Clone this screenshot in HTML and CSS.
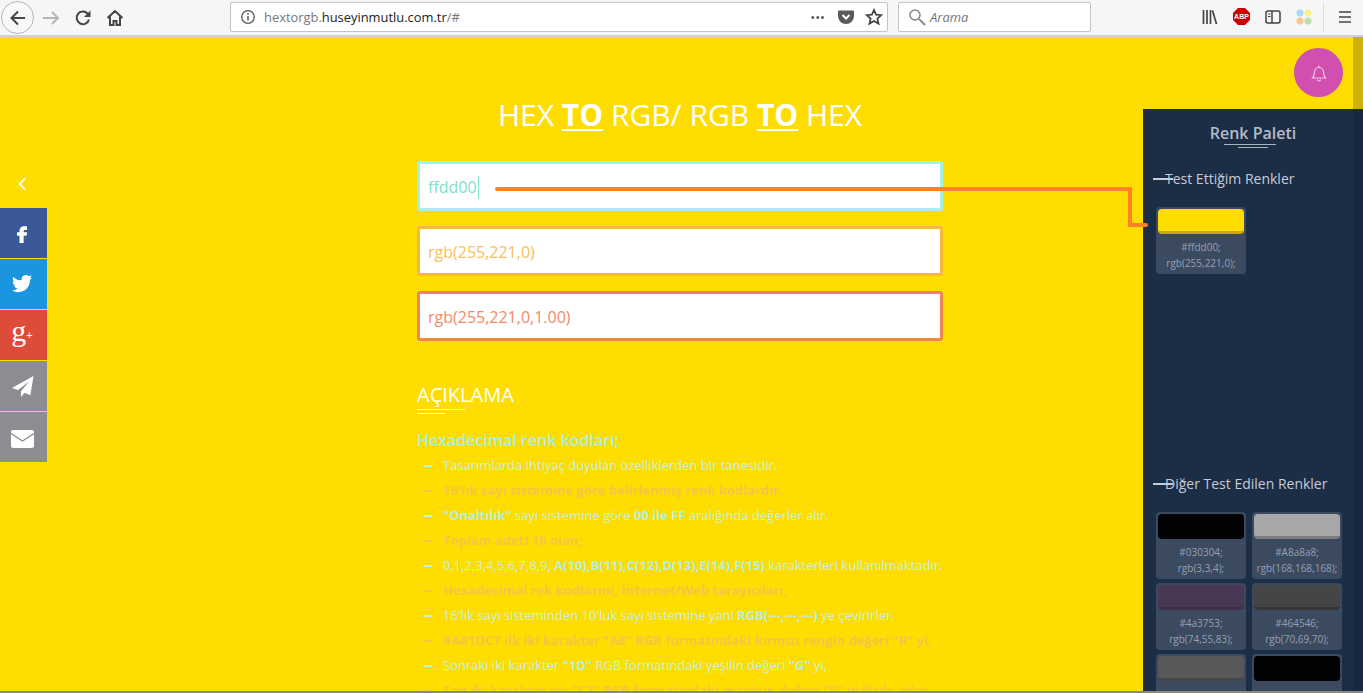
FILE: index.html
```html
<!DOCTYPE html>
<html lang="en">
<head>
  <meta charset="UTF-8" />
  <title>HEX to RGB</title>
  <link rel="stylesheet" href="styles.css">
</head>
<body>
  <!-- 1) Browser toolbar -->
  <header class="toolbar">
    <button class="back-btn">
      <svg width="20" height="20" viewBox="0 0 20 20"><path d="M17 10H4M10 3.5 3.5 10l6.500 6.500" fill="none" stroke="#444" stroke-width="2"/></svg>
    </button>
    <svg class="nav-icon forward" width="18" height="18" viewBox="0 0 18 18"><path d="M1 9h15M10 3l6 6-6 6" fill="none" stroke="#b5b5b5" stroke-width="2"/></svg>
    <svg class="nav-icon reload" width="18" height="18" viewBox="0 0 18 18"><path d="M15 10.500A6.300 6.300 0 1 1 13.500 4.500L15.500 6.500" fill="none" stroke="#444" stroke-width="2"/><path d="M16.500 1.500v6.500H10z" fill="#444"/></svg>
    <svg class="nav-icon home" width="18" height="18" viewBox="0 0 18 18"><path d="M1.500 9 9 2l7.500 7M4 7.500V16h3.500v-4h3v4H14V7.500" fill="none" stroke="#444" stroke-width="2"/></svg>

    <div class="url-bar">
      <svg width="16" height="16" viewBox="0 0 16 16"><circle cx="8" cy="8" r="6.300" fill="none" stroke="#555" stroke-width="1.300"/><path d="M8 7v4.500M8 4.200v1.500" stroke="#555" stroke-width="1.500"/></svg>
      <span class="url-text">hextorgb.<b>huseyinmutlu.com.tr</b>/#</span>
      <span class="url-dots">•••</span>
      <svg width="18" height="18" viewBox="0 0 18 18"><path d="M2 2.500h14a1 1 0 0 1 1 1V8a8 8 0 0 1-16 0V3.500a1 1 0 0 1 1-1z" fill="#5a5a5a"/><path d="M5.500 7 9 10.500 12.500 7" fill="none" stroke="#fff" stroke-width="2"/></svg>
      <svg class="star" width="18" height="18" viewBox="0 0 18 18"><path d="m9 2 2.100 4.700 5.100.5-3.800 3.400 1.100 5L9 13l-4.500 2.600 1.100-5-3.800-3.400 5.100-.5z" fill="none" stroke="#444" stroke-width="1.800"/></svg>
    </div>

    <div class="search-bar">
      <svg width="18" height="18" viewBox="0 0 18 18"><circle cx="7" cy="7" r="5" fill="none" stroke="#888" stroke-width="1.600"/><path d="m11 11 6 6" stroke="#888" stroke-width="1.800"/></svg>
      <span>Arama</span>
    </div>

    <div class="tool-icons">
      <svg width="16" height="16" viewBox="0 0 16 16"><path d="M1.500 1v14M5 1v14M8.500 1v14M10.500 1.500l4 13.500" stroke="#444" stroke-width="1.700" fill="none"/></svg>
      <svg width="17" height="17" viewBox="0 0 17 17"><path d="M5 0h7l5 5v7l-5 5H5l-5-5V5z" fill="#c00"/><text x="8.500" y="11.300" class="abp-text">ABP</text></svg>
      <svg width="16" height="16" viewBox="0 0 16 16"><rect x="1" y="2" width="14" height="12" rx="2" fill="none" stroke="#444" stroke-width="1.500"/><path d="M7 2v12" stroke="#444" stroke-width="1.500"/><path d="M3 5h2.500M3 7.500h2.500" stroke="#444"/></svg>
      <svg width="16" height="16" viewBox="0 0 16 16"><circle cx="4" cy="4" r="3.500" fill="#a8d8f5"/><circle cx="12" cy="4" r="3.500" fill="#f8f08c"/><circle cx="4" cy="12" r="3.500" fill="#f8c890"/><circle cx="12" cy="12" r="3.500" fill="#bde0a8"/></svg>
      <span class="tool-divider"></span>
      <svg width="14" height="14" viewBox="0 0 14 14"><path d="M1 2h12M1 7h12M1 12h12" stroke="#444" stroke-width="1.700"/></svg>
    </div>
  </header>

  <!-- 2) Page -->
  <div class="page">
    <nav class="share">
      <div class="share-toggle">
        <svg width="10" height="14" viewBox="0 0 10 14"><path d="M8 1.500 2.500 7 8 12.500" fill="none" stroke="#fff" stroke-width="1.800"/></svg>
      </div>
      <a class="share-item fb"><svg width="20" height="20" viewBox="0 0 24 24"><path d="M14.500 8.500H18V4h-3.500C11.500 4 9 6.500 9 9.500V11H6v4.300h3V24h5v-8.700h3.500l.7-4.300H14V9.500c0-.6.300-1 .500-1z" fill="#fff"/></svg></a>
      <a class="share-item tw"><svg width="20" height="20" viewBox="0 0 24 24"><path d="M23.953 4.570a10 10 0 01-2.825.775 4.958 4.958 0 002.163-3.723c-.951.555-2.005.959-3.127 1.184a4.920 4.920 0 00-8.384 4.482C7.690 8.095 4.067 6.130 1.640 3.162a4.822 4.822 0 00-.666 2.475c0 1.710.870 3.213 2.188 4.096a4.904 4.904 0 01-2.228-.616v.060a4.923 4.923 0 003.946 4.827 4.996 4.996 0 01-2.212.085 4.936 4.936 0 004.604 3.417 9.867 9.867 0 01-6.102 2.105c-.390 0-.779-.023-1.170-.067a13.995 13.995 0 007.557 2.209c9.053 0 13.998-7.496 13.998-13.985 0-.210 0-.420-.015-.630A9.935 9.935 0 0024 4.590z" fill="#fff"/></svg></a>
      <a class="share-item gp"><span class="gp-g">g</span><span class="gp-plus">+</span></a>
      <a class="share-item tg"><svg width="23" height="23" viewBox="0 0 24 24"><path d="M23.500 1 1 13.500l6.500 2.200L19 6.500 10.500 17v6l3.700-4.500 6 2.500z" fill="#fff"/></svg></a>
      <a class="share-item mail"><svg width="23" height="18" viewBox="0 0 23 18"><rect width="23" height="18" rx="2" fill="#fff"/><path d="M0 3.500 11.500 11 23 3.500" fill="none" stroke="#8e8c92" stroke-width="1.300"/></svg></a>
    </nav>

    <main class="converter">
      <h1 class="page-title">HEX <b>TO</b> RGB/ RGB <b>TO</b> HEX</h1>

      <div class="fields">
        <div class="field field-hex">ffdd00<span class="caret"></span></div>
        <div class="field field-rgb">rgb(255,221,0)</div>
        <div class="field field-rgba">rgb(255,221,0,1.00)</div>
      </div>

      <h2 class="section-title">AÇIKLAMA</h2>
      <h3 class="section-sub">Hexadecimal renk kodları;</h3>
      <ul class="notes">
        <li>Tasarımlarda ihtiyaç duyulan özelliklerden bir tanesidir.</li>
        <li>16'lık sayı sistemine göre belirlenmiş renk kodlardır.</li>
        <li><b>"Onaltılık"</b> sayı sistemine göre <b>00 ile FF</b> aralığında değerler alır.</li>
        <li>Toplam adeti 16 olan;</li>
        <li>0,1,2,3,4,5,6,7,8,9, <b>A(10),B(11),C(12),D(13),E(14),F(15)</b> karakterleri kullanılmaktadır.</li>
        <li>Hexadecimal rek kodlarını, İnternet/Web tarayıcıları,</li>
        <li>16'lık sayı sisteminden 10'luk sayı sistemine yani <b>RGB(---,---,---)</b> ye çevirirler.</li>
        <li>#A81DC7 ilk iki karakter "A8" RGB formatındaki kırmızı rengin değeri "R" yi,</li>
        <li>Sonraki iki karakter <b>"1D"</b> RGB formatındaki yeşilin değeri <b>"G"</b> yi,</li>
        <li>Son iki karakter ise "C7" RGB formatındaki mavinin değeri "B" yi ifade eder.</li>
      </ul>
    </main>

    <div class="side-col">
      <div class="bell-row">
        <div class="bell">
          <svg width="18" height="18" viewBox="0 0 18 18"><path d="M2.500 14c1.500-1.500 2-2.500 2-6a4.500 4.500 0 0 1 9 0c0 3.500.5 4.500 2 6zM9 1.500v2M7.500 15.500a1.500 1.500 0 0 0 3 0" fill="none" stroke="#f6c6e6" stroke-width="1.200"/></svg>
        </div>
        <div class="page-scroll"></div>
      </div>

      <aside class="palette">
        <h2 class="palette-title">Renk Paleti</h2>

        <section class="tested">
          <h3 class="palette-sub">Test Ettiğim Renkler</h3>
          <div class="swatches">
            <div class="swatch"><div class="chip chip-1"></div><p>#ffdd00;<br>rgb(255,221,0);</p></div>
          </div>
        </section>

        <section class="others">
          <h3 class="palette-sub">Diğer Test Edilen Renkler</h3>
          <div class="swatches">
            <div class="swatch"><div class="chip chip-2"></div><p>#030304;<br>rgb(3,3,4);</p></div>
            <div class="swatch"><div class="chip chip-3"></div><p>#A8a8a8;<br>rgb(168,168,168);</p></div>
            <div class="swatch"><div class="chip chip-4"></div><p>#4a3753;<br>rgb(74,55,83);</p></div>
            <div class="swatch"><div class="chip chip-5"></div><p>#464546;<br>rgb(70,69,70);</p></div>
            <div class="swatch"><div class="chip chip-6"></div></div>
            <div class="swatch"><div class="chip chip-7"></div></div>
          </div>
        </section>
      </aside>
    </div>

    <!-- line from the input to its saved swatch -->
    <svg class="connector" width="660" height="50" viewBox="0 0 660 50">
      <path d="M2 3H635V39H651" fill="none" stroke="#ff8226" stroke-width="4" stroke-linecap="round"/>
    </svg>
  </div>

  <div class="bottom-edge"></div>
</body>
</html>
```

FILE: styles.css
```css
* {
  box-sizing: border-box;
}

html, body {
  height: 100%;
}

body {
  margin: 0;
  height: 100vh;
  overflow: hidden;
  display: flex;
  flex-direction: column;
  font-family: 'Open Sans', sans-serif;
  position: relative;
}

/* Toolbar */
.toolbar {
  height: 37px;
  flex: none;
  display: flex;
  align-items: center;
  background-color: #f5f6f7;
  border-bottom: 2px solid #cfd0d2;
  font-family: 'Open Sans', sans-serif;
}

.back-btn {
  width: 33px;
  height: 33px;
  margin-left: 1px;
  padding: 0;
  border: 1px solid #b5b5b5;
  border-radius: 50%;
  background-color: #f8f8f9;
  display: flex;
  align-items: center;
  justify-content: center;
}

.nav-icon {
  flex: none;
}

.forward { margin-left: 8px; }
.reload { margin-left: 14px; }
.home { margin-left: 14px; }

.url-bar {
  width: 658px;
  height: 30px;
  margin-left: 106px;
  margin-top: -2px;
  padding: 0 4px 0 9px;
  display: flex;
  align-items: center;
  gap: 6px;
  background-color: #fff;
  border: 1px solid #c3c4c6;
  border-radius: 2px;
}

.url-text {
  margin-left: 2px;
  flex: 1;
  font-size: 12.900px;
  color: #777;
}

.url-text b {
  font-weight: 400;
  color: #222;
}

.url-dots {
  font-size: 13px;
  letter-spacing: 0;
  color: #555;
  margin-right: 6px;
}

.star {
  margin-left: 4px;
}

.search-bar {
  width: 193px;
  height: 30px;
  margin-left: 10px;
  margin-top: -2px;
  padding-left: 9px;
  display: flex;
  align-items: center;
  gap: 4px;
  background-color: #fff;
  border: 1px solid #c3c4c6;
  border-radius: 2px;
  font-size: 13px;
  font-style: italic;
  color: #777;
}

.tool-icons {
  margin-left: 111px;
  margin-top: -2px;
  display: flex;
  align-items: center;
  gap: 15px;
}

.abp-text {
  font-family: 'Liberation Sans', sans-serif;
  font-size: 7px;
  font-weight: 700;
  fill: #fff;
  text-anchor: middle;
}

.tool-divider {
  width: 1px;
  height: 30px;
  background-color: #dcdddf;
  margin: 0 -1px 0 -4px;
}

/* Page */
.page {
  flex: 1;
  min-height: 0;
  display: flex;
  position: relative;
  background-color: #ffdd00;
}

/* Share rail */
.share {
  width: 47px;
  flex: none;
  display: flex;
  flex-direction: column;
  gap: 1px;
  padding-top: 129px;
}

.share-toggle {
  height: 41px;
  display: flex;
  align-items: flex-start;
  justify-content: center;
  padding: 11px 3px 0 0;
}

.share-item {
  height: 50px;
  padding-right: 3px;
  display: flex;
  align-items: center;
  justify-content: center;
}

.fb { background-color: #3b5998; }
.tw { background-color: #1b95e0; }
.gp { background-color: #dd4b39; }
.tg, .mail { background-color: #8e8c92; }
.mail { padding-top: 3px; }

.gp-g {
  font-family: 'Liberation Serif', serif;
  font-size: 30px;
  line-height: 1;
  color: #fff;
  margin-top: -8px;
}

.gp-plus {
  font-family: 'Liberation Sans', sans-serif;
  font-size: 11px;
  color: #fff;
}

/* Converter */
.converter {
  width: 526px;
  flex: none;
  margin-left: 370px;
  padding-top: 59px;
}

.page-title {
  margin: 0 0 27px;
  height: 38px;
  font-size: 30px;
  line-height: 38px;
  font-weight: 400;
  color: #fff;
  text-align: center;
  white-space: nowrap;
}

.page-title b {
  font-weight: 700;
  text-decoration: underline;
  text-underline-offset: 3px;
  text-decoration-thickness: 2px;
}

.fields {
  display: flex;
  flex-direction: column;
  gap: 15px;
}

.field {
  height: 50px;
  padding: 2px 0 0 8px;
  display: flex;
  align-items: center;
  background-color: #fff;
  border: 3px solid;
  border-radius: 3px;
  font-size: 16px;
}

.field-hex { border-color: #a5f2e2; color: #7fe0cc; }
.field-rgb { border-color: #f5b93c; color: #fbbf5a; }
.field-rgba { border-color: #ef8354; color: #f28a6a; }

.caret {
  width: 1px;
  height: 23px;
  margin-left: 1px;
  background-color: #7fe0cc;
}

.section-title {
  margin: 40px 0 0;
  height: 28px;
  font-size: 20px;
  line-height: 28px;
  font-weight: 400;
  color: #fff;
  position: relative;
}

.section-title::before,
.section-title::after {
  content: '';
  position: absolute;
  left: 0;
  height: 1px;
  background-color: #fff;
}

.section-title::before { top: 28px; width: 48px; }
.section-title::after { top: 32px; width: 28px; }

.section-sub {
  margin: 19px 0 0;
  height: 24px;
  font-size: 16px;
  line-height: 24px;
  font-weight: 600;
  color: #a8efe0;
}

.notes {
  margin: 1px 0 0;
  padding: 0;
  list-style: none;
  font-size: 13px;
  line-height: 25px;
  white-space: nowrap;
}

.notes li {
  padding-left: 26px;
  position: relative;
  color: #c4f2dc;
}

.notes li::before {
  content: '';
  position: absolute;
  left: 7px;
  top: 12px;
  width: 8px;
  height: 2px;
  background-color: currentColor;
}

.notes li b {
  font-weight: 700;
  color: #b4efdf;
}

.notes li:nth-child(even) {
  font-weight: 700;
  color: #f4c648;
}

/* Right column */
.side-col {
  width: 220px;
  flex: none;
  margin-left: auto;
  display: flex;
  flex-direction: column;
}

.bell-row {
  height: 72px;
  flex: none;
  display: flex;
  justify-content: flex-end;
  padding-top: 11px;
  position: relative;
}

.bell {
  width: 49px;
  height: 49px;
  margin-right: 20px;
  border-radius: 50%;
  background-color: #d14fae;
  display: flex;
  align-items: center;
  justify-content: center;
}

.page-scroll {
  position: absolute;
  top: 0;
  right: 0;
  width: 10px;
  height: 100%;
  background-color: #cdb20b;
}

.palette {
  flex: 1;
  min-height: 0;
  padding: 12px 0 0 13px;
  overflow: hidden;
  position: relative;
  background-color: #1c2d46;
}

.palette::after {
  content: '';
  position: absolute;
  top: 0;
  right: 0;
  width: 10px;
  height: 100%;
  background-color: #19283f;
}

.palette-title {
  margin: 0 0 0 -13px;
  height: 24px;
  font-size: 16px;
  line-height: 24px;
  font-weight: 600;
  text-align: center;
  color: #b4bcc8;
  position: relative;
}

.palette-title::before,
.palette-title::after {
  content: '';
  position: absolute;
  left: 50%;
  height: 1px;
  background-color: #aab3c0;
}

.palette-title::before { top: 23px; width: 52px; margin-left: -29px; }
.palette-title::after { top: 26px; width: 30px; margin-left: -15px; }

.tested {
  height: 327px;
}

.palette-sub {
  margin: 0;
  padding: 22px 0 0 9px;
  height: 62px;
  font-size: 14px;
  line-height: 24px;
  font-weight: 400;
  color: #c5ccd6;
  position: relative;
}

.palette-sub::before {
  content: '';
  position: absolute;
  left: -3px;
  top: 33px;
  width: 20px;
  height: 2px;
  background-color: #c5ccd6;
}

.others .palette-sub {
  padding-top: 0;
  height: 40px;
}

.others .palette-sub::before {
  top: 11px;
}

.swatches {
  display: grid;
  grid-template-columns: 90px 90px;
  column-gap: 6px;
  row-gap: 4px;
}

.swatch {
  height: 67px;
  padding: 2px;
  border-radius: 4px;
  background-color: #3c4a60;
}

.swatch p {
  margin: 5px 0 0;
  font-size: 10px;
  line-height: 16px;
  text-align: center;
  white-space: nowrap;
  color: #93a0b4;
}

.chip {
  height: 25px;
  border-radius: 4px;
  border-bottom: 3px solid;
}

.chip-1 { background-color: #ffdd00; border-color: #c7a90c; }
.chip-2 { background-color: #030304; border-color: #050506; }
.chip-3 { background-color: #a8a8a8; border-color: #7d7d7d; }
.chip-4 { background-color: #4a3753; border-color: #3e2e46; }
.chip-5 { background-color: #464546; border-color: #363536; }
.chip-6 { background-color: #58585a; border-color: #454547; }
.chip-7 { background-color: #020204; border-color: #040406; }

/* Overlays */
.connector {
  position: absolute;
  left: 495px;
  top: 149px;
}

.bottom-edge {
  position: absolute;
  left: 0;
  right: 0;
  bottom: 0;
  height: 2px;
  background-color: #8a8a80;
}
```
